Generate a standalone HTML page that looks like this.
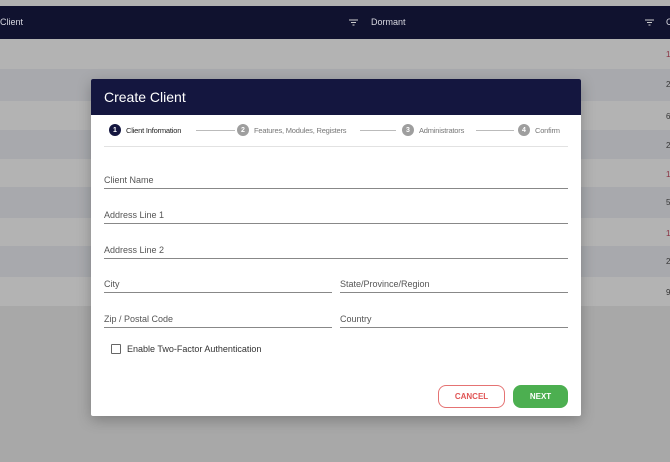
<!DOCTYPE html>
<html><head><style>
*{margin:0;padding:0;box-sizing:border-box}
body{width:670px;height:462px;overflow:hidden;background:#a8a8a8;font-family:"Liberation Sans",sans-serif;position:relative}
.top{position:absolute;left:0;top:0;width:670px;height:6px;background:#b1b1b1}
.hdr{position:absolute;left:0;top:6px;width:670px;height:33px;background:#10122f;color:#d8d8e0;font-size:9px}
.hdr span{position:absolute;top:11px}
.row{position:absolute;left:0;width:670px}
.row b{position:absolute;left:666px;top:11px;font-size:8px;font-weight:normal;color:#333}
.modal{position:absolute;left:91px;top:79px;width:490px;height:337px;background:#fff;box-shadow:0 4px 14px rgba(0,0,0,.25);border-radius:2px;overflow:hidden}
.mh{height:36px;background:#14163f;color:#fff;font-size:14px;padding:10px 0 0 13px}
.steps{position:absolute;top:45px;left:17px;width:460px;height:14px;font-size:7.5px;color:#777;letter-spacing:-0.2px}
.c{position:absolute;top:0;width:12px;height:12px;border-radius:50%;background:#9e9e9e;color:#fff;font-size:7px;display:flex;align-items:center;justify-content:center;font-weight:bold;letter-spacing:0}
.st{position:absolute;top:2px;white-space:nowrap}
.ln{position:absolute;top:6px;height:1px;background:#bbb}
.sep{position:absolute;left:13px;top:67px;width:464px;height:1px;background:#e2e2e2}
.f{position:absolute;height:1px;background:#888;font-size:9px;color:#555}
.f span{position:absolute;top:-13px;left:0;white-space:nowrap}
.cb{position:absolute;left:20px;top:265px;width:10px;height:10px;border:1.5px solid #666;border-radius:1px}
.cbl{position:absolute;left:36px;top:265px;font-size:9px;color:#333}
.btn{position:absolute;top:306px;height:23px;border-radius:8px;font-size:8px;font-weight:bold;text-align:center;line-height:21px}
</style></head><body>
<div class="top"></div>
<div class="hdr"><span style="left:0">Client</span>
<svg style="position:absolute;left:349px;top:13px" width="9" height="7"><path d="M0 1h9M2 3.5h5M3.5 6h2" stroke="#ccc" stroke-width="1"/></svg>
<span style="left:371px">Dormant</span>
<svg style="position:absolute;left:645px;top:13px" width="9" height="7"><path d="M0 1h9M2 3.5h5M3.5 6h2" stroke="#ccc" stroke-width="1"/></svg>
<span style="left:666px">C</span></div>
<div class="row" style="top:39px;height:30px;background:#b3b3b3"><b style="color:#8a3040">1</b></div>
<div class="row" style="top:69px;height:32px;background:#a8a9ad"><b>2</b></div>
<div class="row" style="top:101px;height:29px;background:#b3b3b3"><b>6</b></div>
<div class="row" style="top:130px;height:29px;background:#a8a9ad"><b>2</b></div>
<div class="row" style="top:159px;height:28px;background:#b3b3b3"><b style="color:#8a3040">1</b></div>
<div class="row" style="top:187px;height:31px;background:#a8a9ad"><b>5</b></div>
<div class="row" style="top:218px;height:28px;background:#b3b3b3"><b style="color:#8a3040">1</b></div>
<div class="row" style="top:246px;height:31px;background:#a8a9ad"><b>2</b></div>
<div class="row" style="top:277px;height:29px;background:#b3b3b3"><b>9</b></div>
<div class="modal">
<div class="mh">Create Client</div>
<div class="steps">
<div class="c" style="left:1px;background:#14163f">1</div><span class="st" style="left:18px;color:#222">Client Information</span>
<div class="ln" style="left:88px;width:39px"></div>
<div class="c" style="left:129px">2</div><span class="st" style="left:146px">Features, Modules, Registers</span>
<div class="ln" style="left:252px;width:36px"></div>
<div class="c" style="left:294px">3</div><span class="st" style="left:311px">Administrators</span>
<div class="ln" style="left:368px;width:38px"></div>
<div class="c" style="left:410px">4</div><span class="st" style="left:427px">Confirm</span>
</div>
<div class="sep"></div>
<div class="f" style="left:13px;top:109px;width:464px"><span>Client Name</span></div>
<div class="f" style="left:13px;top:144px;width:464px"><span>Address Line 1</span></div>
<div class="f" style="left:13px;top:179px;width:464px"><span>Address Line 2</span></div>
<div class="f" style="left:13px;top:213px;width:228px"><span>City</span></div>
<div class="f" style="left:249px;top:213px;width:228px"><span>State/Province/Region</span></div>
<div class="f" style="left:13px;top:248px;width:228px"><span>Zip / Postal Code</span></div>
<div class="f" style="left:249px;top:248px;width:228px"><span>Country</span></div>
<div class="cb"></div><div class="cbl">Enable Two-Factor Authentication</div>
<div class="btn" style="left:347px;width:67px;border:1px solid #e57373;color:#e05555">CANCEL</div>
<div class="btn" style="left:422px;width:55px;background:#4caf50;color:#fff;line-height:23px">NEXT</div>
</div>
</body></html>
